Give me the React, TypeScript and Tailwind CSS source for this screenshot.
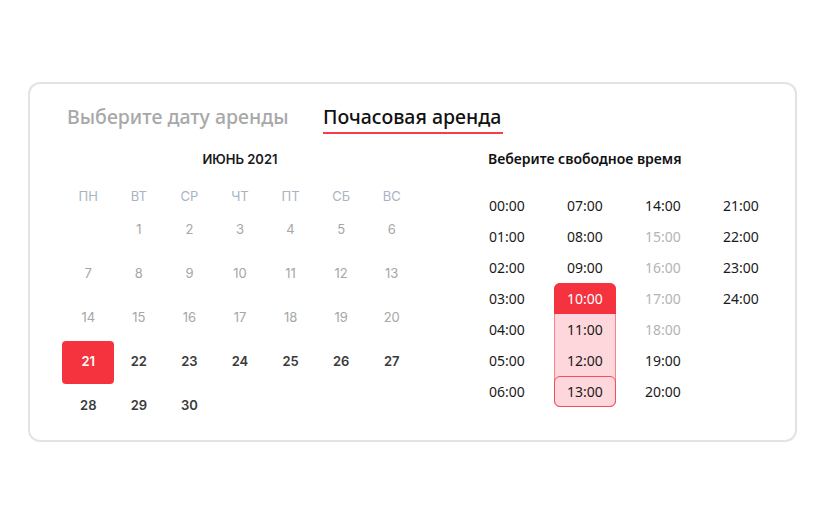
import React from "react";

const heads = ["ПН", "ВТ", "СР", "ЧТ", "ПТ", "СБ", "ВС"];
const days: (number | null)[] = [null, ...Array.from({ length: 30 }, (_, i) => i + 1)];

const cols = [
  ["00:00", "01:00", "02:00", "03:00", "04:00", "05:00", "06:00"],
  ["07:00", "08:00", "09:00", "10:00", "11:00", "12:00", "13:00"],
  ["14:00", "15:00", "16:00", "17:00", "18:00", "19:00", "20:00"],
  ["21:00", "22:00", "23:00", "24:00"],
];
const disabled = new Set(["15:00", "16:00", "17:00", "18:00"]);

const ub = { fontFamily: '"Noto Sans", "Open Sans", sans-serif' };
const inter = { fontFamily: 'Inter, "Noto Sans", sans-serif' };

function Slot({ t }: { t: string }) {
  return (
    <div
      className={`-ml-[12px] flex h-[31px] w-[62px] items-center justify-center text-[14px] ${
        disabled.has(t) ? "text-[#b4b4b4]" : "text-[#1a1a1a]"
      }`}
    >
      {t}
    </div>
  );
}

export default function App() {
  return (
    <div className="h-[525px] w-[825px] bg-white pl-[28px] pt-[82px]">
      <div className="h-[360px] w-[769px] overflow-hidden rounded-[12px] border-2 border-[#e3e3e3] bg-white">
        <div className="flex pl-[37px] pt-[18px]" style={ub}>
          <div className="w-[256px] shrink-0 text-[19.5px] font-medium leading-[29px] text-[#a8a8a8]">Выберите дату аренды</div>
          <div className="shrink-0 border-b-2 border-[#f43f4b] pb-[1px] pr-[2px] text-[19.5px] font-medium leading-[29px] text-[#111]">
            Почасовая аренда
          </div>
        </div>
        <div className="mt-[15px] flex pl-[33px]">
          <div className="w-[354px] shrink-0" style={inter}>
            <div className="h-[20px] text-center text-[13px] font-semibold leading-[20px] text-[#1a1a1a]">ИЮНЬ 2021</div>
            <div className="mt-[17px] grid grid-cols-7">
              {heads.map((h) => (
                <div key={h} className="flex h-[22px] items-center justify-center text-[13px] text-[#aab3c3]">
                  {h}
                </div>
              ))}
              {days.map((d, i) => (
                <div key={i} className="flex h-[44px] items-center justify-center">
                  {d === 21 ? (
                    <div className="flex h-[43px] w-[52px] shrink-0 items-center justify-center rounded-[4px] bg-[#f5333f] text-[13px] font-semibold text-white">
                      21
                    </div>
                  ) : d === null ? null : (
                    <span
                      className={`text-[13px] ${d > 21 ? "font-semibold text-[#3a3a3a]" : "text-[#a6a6a6]"}`}
                    >
                      {d}
                    </span>
                  )}
                </div>
              ))}
            </div>
          </div>
          <div className="ml-[71px] w-[300px] shrink-0" style={ub}>
            <div className="h-[20px] text-[14px] font-semibold leading-[20px] text-[#111]">Веберите свободное время</div>
            <div className="mt-[21px] flex">
              {cols.map((c, ci) => (
                <div key={ci} className="w-[78px] shrink-0">
                  {ci === 1 ? (
                    <>
                      {c.slice(0, 3).map((t) => (
                        <Slot key={t} t={t} />
                      ))}
                      <div className="-ml-[12px] h-[124px] w-[62px] rounded-[6px] border border-[#f7838b] bg-[#fdd7db]">
                        <div className="-mx-px -mt-px flex h-[31px] items-center justify-center rounded-t-[6px] bg-[#f5333f] text-[14px] text-white">
                          10:00
                        </div>
                        <div className="flex h-[31px] items-center justify-center text-[14px] text-[#1a1a1a]">11:00</div>
                        <div className="flex h-[31px] items-center justify-center text-[14px] text-[#1a1a1a]">12:00</div>
                        <div className="-mx-px -mb-px flex h-[31px] items-center justify-center rounded-[6px] border border-[#f0505c] text-[14px] text-[#1a1a1a]">
                          13:00
                        </div>
                      </div>
                    </>
                  ) : (
                    c.map((t) => <Slot key={t} t={t} />)
                  )}
                </div>
              ))}
            </div>
          </div>
        </div>
      </div>
    </div>
  );
}
